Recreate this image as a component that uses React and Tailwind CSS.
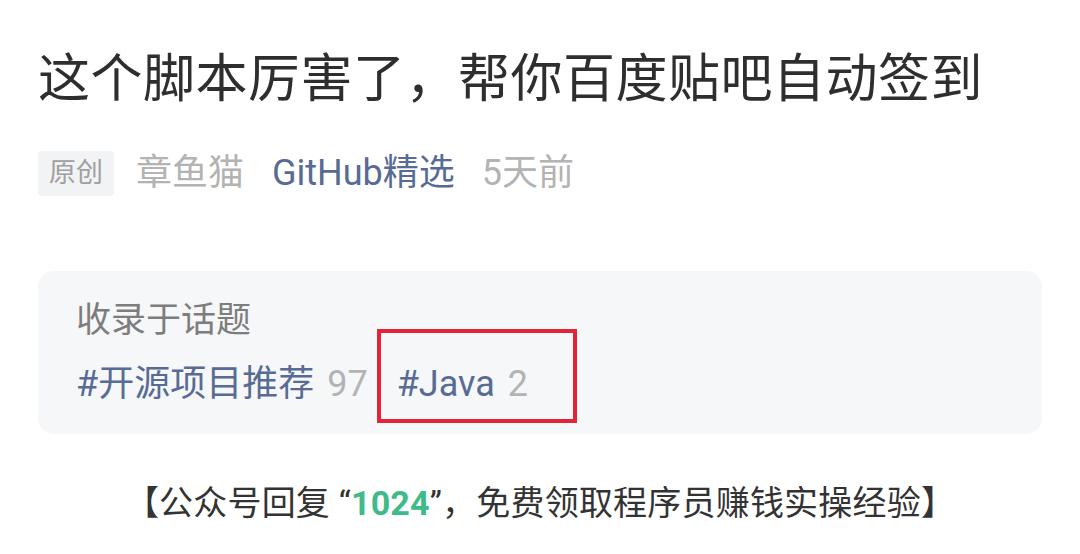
import React from "react";

const font = { fontFamily: 'Roboto, "Noto Sans CJK SC", sans-serif' };

const App = () => {
  return (
    <div className="w-[1080px] h-[554px] bg-white overflow-hidden" style={font}>
      <div className="px-[38px] pt-[46px]">
        {/*title*/}
        <h1 className="text-[52px] leading-[68px] text-[#2e2e2e] tracking-[0.5px]">
          这个脚本厉害了，帮你百度贴吧自动签到
        </h1>
        {/*meta*/}
        <div className="flex items-center mt-[36px] text-[36px] leading-[46px]">
          <span className="bg-[#f2f3f5] text-[#a0a0a0] text-[27px] leading-[45px] px-[11px] rounded-[4px]">
            原创
          </span>
          <span className="ml-[22px] text-[#b3b3b3]">章鱼猫</span>
          <span className="ml-[28px] text-[#576b95]">GitHub精选</span>
          <span className="ml-[27px] text-[#b3b3b3]">5天前</span>
        </div>
        {/*topics card*/}
        <div className="mt-[75px] bg-[#f6f7f9] rounded-[16px] h-[163px] pl-[38px] pt-[28px]">
          <div className="text-[35px] leading-[44px] text-[#7d7d7d]">收录于话题</div>
          <div className="flex items-center mt-[17px] text-[36px] leading-[48px]">
            <span className="text-[#576b95]">#开源项目推荐</span>
            <span className="ml-[13px] text-[#b3b3b3]">97</span>
            <span className="relative ml-[29px]">
              <span className="text-[#576b95]">#Java</span>
              <span className="ml-[13px] text-[#b3b3b3]">2</span>
              <span className="absolute left-[-20px] right-[-49px] top-[-31px] bottom-[-15px] border-[4px] border-[#e3233a]"></span>
            </span>
          </div>
        </div>
        {/*footer*/}
        <div className="mt-[46px] text-center text-[34px] leading-[46px] text-[#333] tracking-[0.2px]">
          【公众号回复 “<span className="text-[#3fbb89] font-bold">1024</span>”，免费领取程序员赚钱实操经验】
        </div>
      </div>
    </div>
  );
};

export default App;
